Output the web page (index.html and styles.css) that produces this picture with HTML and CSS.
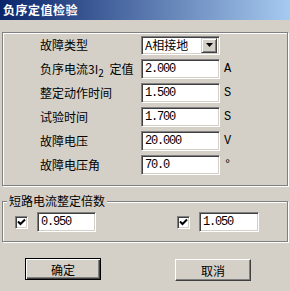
FILE: index.html
```html
<!DOCTYPE html>
<html>
<head>
    <title>负序定值检验</title>
    <link rel="stylesheet" href="styles.css">
</head>
<body>
    <div class="window">
        <div class="titlebar">负序定值检验</div>

        <div class="group params">
            <div class="row">
                <span class="label">故障类型</span>
                <div class="combo">
                    <span class="combo-text">A相接地</span>
                    <span class="combo-btn">
                        <svg width="7" height="4" viewBox="0 0 7 4"><path d="M0 0H7L3.5 4Z" fill="#000"/></svg>
                    </span>
                </div>
            </div>
            <div class="row">
                <span class="label">负序电流3I<sub>2</sub> 定值</span>
                <div class="edit">2.000</div>
                <span class="unit">A</span>
            </div>
            <div class="row">
                <span class="label">整定动作时间</span>
                <div class="edit">1.500</div>
                <span class="unit">S</span>
            </div>
            <div class="row">
                <span class="label">试验时间</span>
                <div class="edit">1.700</div>
                <span class="unit">S</span>
            </div>
            <div class="row">
                <span class="label">故障电压</span>
                <div class="edit">20.000</div>
                <span class="unit">V</span>
            </div>
            <div class="row">
                <span class="label">故障电压角</span>
                <div class="edit">70.0</div>
                <span class="unit">°</span>
            </div>
        </div>

        <div class="group multiples">
            <span class="legend">短路电流整定倍数</span>
            <div class="pair">
                <span class="check">
                    <svg width="9" height="9" viewBox="0 0 9 9"><path d="M1 3.5L3.5 6L8 1.5" fill="none" stroke="#000" stroke-width="2"/></svg>
                </span>
                <div class="edit small">0.950</div>
            </div>
            <div class="pair second">
                <span class="check">
                    <svg width="9" height="9" viewBox="0 0 9 9"><path d="M1 3.5L3.5 6L8 1.5" fill="none" stroke="#000" stroke-width="2"/></svg>
                </span>
                <div class="edit small wide">1.050</div>
            </div>
        </div>

        <div class="buttons">
            <button class="btn default">确定</button>
            <button class="btn cancel">取消</button>
        </div>
    </div>
</body>
</html>
```

FILE: styles.css
```css
body {
    margin: 0;
    background: #d4d0c8;
    font-family: "Noto Sans CJK SC", "Liberation Sans", sans-serif;
    font-size: 12px;
    color: #000;
}

.window {
    width: 290px;
    height: 291px;
    overflow: hidden;
}

.titlebar {
    height: 20px;
    line-height: 20px;
    padding-left: 3px;
    background: linear-gradient(to right, #0a246a, #a6caf0);
    color: #fff;
    font-weight: bold;
    font-size: 12px;
    letter-spacing: 0.5px;
}

/* etched group box */
.group {
    position: relative;
    box-sizing: border-box;
    width: 286px;
    margin-left: 2px;
    border: 1px solid #808080;
    box-shadow: 1px 1px 0 #fff, inset 1px 1px 0 #fff;
}

.params {
    margin-top: 12px;
    padding: 0 0 8px 37px;
}

.row {
    display: grid;
    grid-template-columns: 101px 79px auto;
    align-items: center;
    height: 24px;
}

.label {
    line-height: 14px;
}

.label sub {
    font-size: 10px;
    vertical-align: -3px;
    line-height: 0;
    margin-right: 3px;
}

.edit {
    box-sizing: border-box;
    height: 20px;
    padding-left: 3px;
    background: #fff;
    border-top: 1px solid #808080;
    border-left: 1px solid #808080;
    border-bottom: 1px solid #fff;
    border-right: 1px solid #fff;
    box-shadow: inset 1px 1px 0 #404040, inset -1px -1px 0 #d4d0c8;
    font-family: "Liberation Mono", monospace;
    font-size: 12px;
    letter-spacing: -1.2px;
    line-height: 18px;
}

.unit {
    margin-left: 4px;
    font-family: "Liberation Mono", monospace;
    font-size: 12px;
}

.combo {
    display: flex;
    align-items: center;
    box-sizing: border-box;
    width: 79px;
    height: 19px;
    background: #fff;
    border-top: 1px solid #808080;
    border-left: 1px solid #808080;
    border-bottom: 1px solid #fff;
    border-right: 1px solid #fff;
    box-shadow: inset 1px 1px 0 #404040, inset -1px -1px 0 #d4d0c8;
    padding: 1px 2px 1px 3px;
}

.combo-text {
    flex: 1;
    line-height: 14px;
}

.combo-btn {
    display: flex;
    align-items: center;
    justify-content: center;
    box-sizing: border-box;
    width: 16px;
    height: 15px;
    background: #d4d0c8;
    border-top: 1px solid #d4d0c8;
    border-left: 1px solid #d4d0c8;
    border-bottom: 1px solid #404040;
    border-right: 1px solid #404040;
    box-shadow: inset 1px 1px 0 #fff, inset -1px -1px 0 #808080;
}

.multiples {
    display: flex;
    align-items: center;
    margin-top: 15px;
    padding: 10px 0 9px 12px;
}

.legend {
    position: absolute;
    left: 4px;
    top: -8px;
    padding: 0 2px;
    background: #d4d0c8;
    line-height: 14px;
}

.pair {
    display: flex;
    align-items: center;
}

.pair.second {
    margin-left: 81px;
}

.check {
    display: flex;
    align-items: center;
    justify-content: center;
    box-sizing: border-box;
    width: 13px;
    height: 13px;
    margin-right: 9px;
    background: #fff;
    border-top: 1px solid #808080;
    border-left: 1px solid #808080;
    border-bottom: 1px solid #fff;
    border-right: 1px solid #fff;
    box-shadow: inset 1px 1px 0 #404040, inset -1px -1px 0 #d4d0c8;
}

.edit.small {
    width: 59px;
}

.edit.wide {
    width: 60px;
}

.buttons {
    display: flex;
    margin-top: 16px;
    padding-left: 25px;
    gap: 74px;
}

.btn {
    box-sizing: border-box;
    width: 76px;
    height: 22px;
    padding: 0;
    background: #d4d0c8;
    font-family: "Noto Sans CJK SC", sans-serif;
    font-size: 12px;
    color: #000;
    border-top: 1px solid #fff;
    border-left: 1px solid #fff;
    border-bottom: 1px solid #404040;
    border-right: 1px solid #404040;
    box-shadow: inset -1px -1px 0 #808080;
}

.btn.default {
    border: 1px solid #000;
    box-shadow: inset 1px 1px 0 #fff, inset -1px -1px 0 #404040, inset -2px -2px 0 #808080;
}

.btn.cancel {
    margin-top: 1px;
}
```
